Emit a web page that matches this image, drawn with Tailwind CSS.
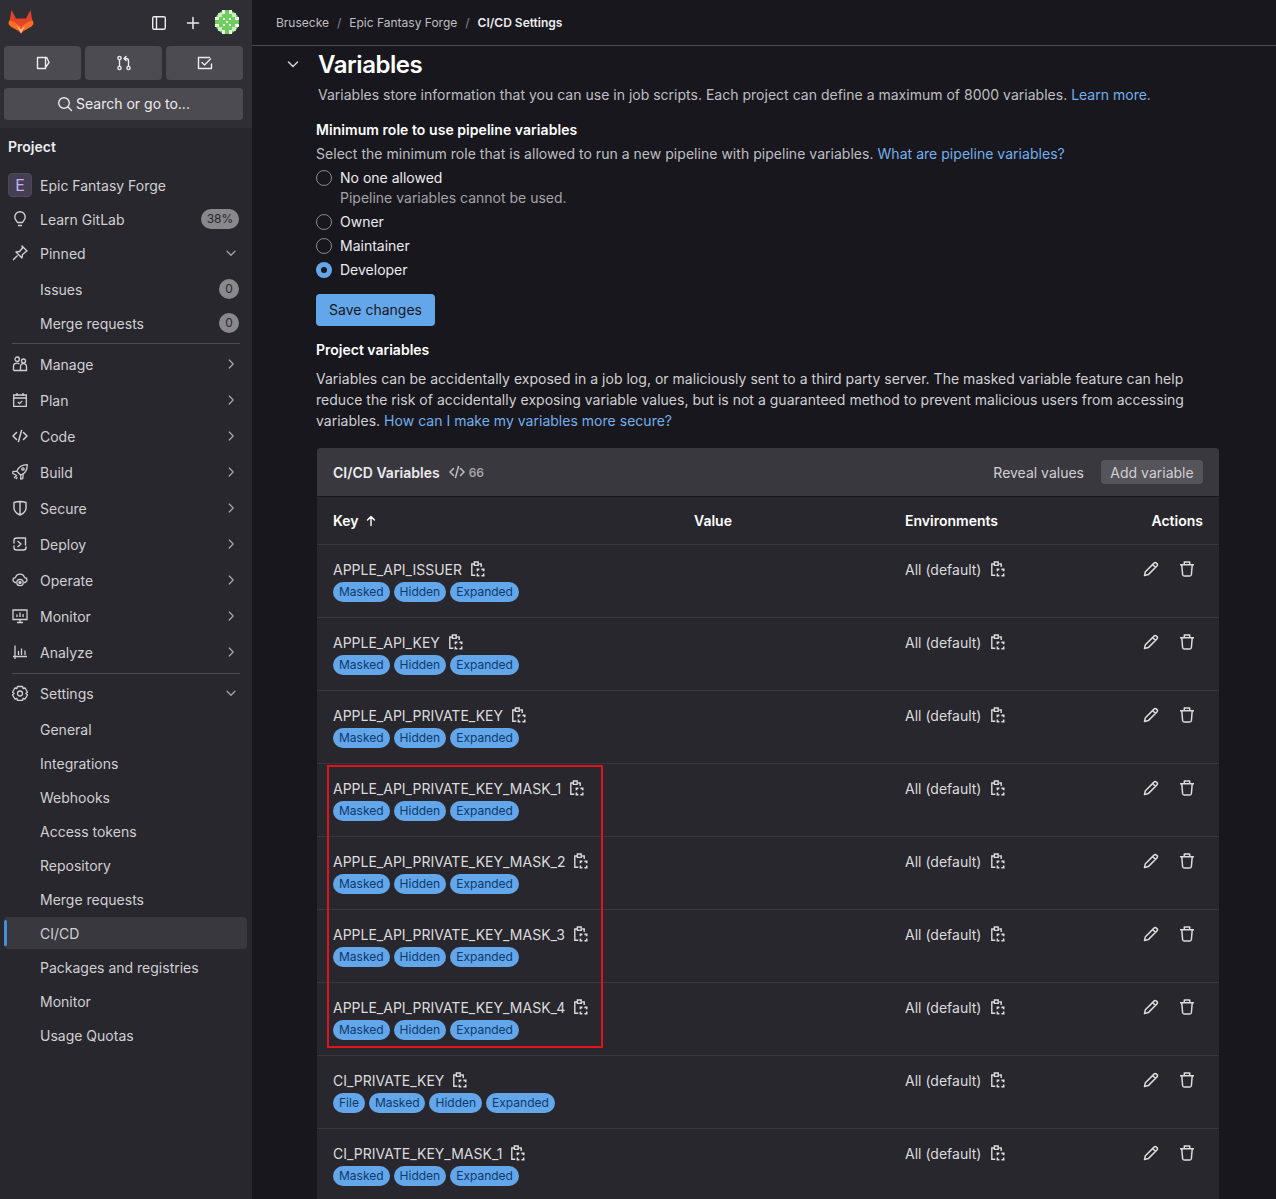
<!DOCTYPE html>
<html lang="en">
<head>
  <meta charset="UTF-8" />
  <title>CI/CD Settings</title>
  <script src="https://cdn.jsdelivr.net/npm/@tailwindcss/browser@4"></script>
</head>
<body class="bg-[#18171d] text-[#ececef] text-[14px] font-['Inter',sans-serif] h-screen overflow-hidden flex">

<!-- icon sheet -->
<svg class="hidden">
  <symbol id="i-copy" viewBox="0 0 16 16" fill="none" stroke="currentColor" stroke-width="1.400">
    <path d="M4.800 3H2.800v11.300h3.500M10.200 3h2v3M5.400 1h3.800v3.400H5.400z"/>
    <path d="M8.400 10.200V8.400h2M12.400 8.400h2.300v1.800M14.700 12.400v2.300h-2.300M10.400 14.700h-2v-2.300" stroke-width="1.600"/>
  </symbol>
  <symbol id="i-pencil" viewBox="0 0 16 16" fill="none" stroke="currentColor" stroke-width="1.500" stroke-linejoin="round">
    <path d="M1.500 14.500l.9-3.800L11 2.100a1.700 1.700 0 0 1 2.400 0l.5.500a1.700 1.700 0 0 1 0 2.400l-8.600 8.600zM9.600 3.500l2.900 2.900"/>
  </symbol>
  <symbol id="i-trash" viewBox="0 0 16 16" fill="none" stroke="currentColor" stroke-width="1.500" stroke-linejoin="round">
    <path d="M1 3.700h14M5.300 3.500V1h5.400v2.500M2.800 4l.8 9.500c.1.800.6 1.500 1.400 1.500h6c.8 0 1.300-.7 1.400-1.500L13.200 4"/>
  </symbol>
  <symbol id="i-down" viewBox="0 0 16 16" fill="none" stroke="currentColor" stroke-width="1.500" stroke-linecap="round" stroke-linejoin="round">
    <path d="M3.500 6l4.500 4.500L12.500 6"/>
  </symbol>
  <symbol id="i-right" viewBox="0 0 16 16" fill="none" stroke="currentColor" stroke-width="1.500" stroke-linecap="round" stroke-linejoin="round">
    <path d="M6 3.500L10.500 8 6 12.500"/>
  </symbol>
  <symbol id="i-code" viewBox="0 0 16 16" fill="none" stroke="currentColor" stroke-width="1.500" stroke-linecap="round" stroke-linejoin="round">
    <path d="M4.500 4.500L1 8l3.500 3.500M11.500 4.500L15 8l-3.500 3.500M9.500 2.500l-3 11"/>
  </symbol>
</svg>

<aside class="w-[252px] shrink-0 h-full bg-[#28272d] flex flex-col">
  <div class="bg-[#2f2e34] h-[128px] pl-1 pr-[9px] shrink-0">
    <div class="h-[46px] flex items-center">
      <svg class="w-[26px] h-[25px] ml-[4px] -mt-[3px]" viewBox="0 0 26 25">
        <path d="M13 24.500L1.200 14.500 3.500 1 8 9.500h10L22.500 1l2.300 13.500z" fill="#e24329"/>
        <path d="M1 11.500c2.600 0 5.500 1.500 8 3.500l4 3-3.500 3.500L2.500 17.500.5 15z M25 11.500c-2.600 0-5.500 1.500-8 3.500l-4 3 3.500 3.500 7-4 2-2.500z" fill="#fc6d26"/>
        <path d="M8.500 16.500L13 20l4.500-3.500-4.500 8z" fill="#fcb87e"/>
      </svg>
      <svg class="w-4 h-4 ml-[117px] text-[#ececef]" viewBox="0 0 16 16" fill="none" stroke="currentColor" stroke-width="1.400"><rect x="1.700" y="1.700" width="12.600" height="12.600" rx="1.500"/><path d="M5.500 2v12"/></svg>
      <svg class="w-4 h-4 ml-[18px] text-[#ececef]" viewBox="0 0 16 16" fill="none" stroke="currentColor" stroke-width="1.500" stroke-linecap="round"><path d="M8 2.500v11M2.500 8h11"/></svg>
      <svg class="ml-[14px] -mt-[2px] w-6 h-6" viewBox="0 0 24 24">
        <circle cx="12" cy="12" r="12" fill="#6fcf5e"/>
        <path d="M0 7h4v3H0zM0 14h4v3H0zM20 7h4v3h-4zM20 14h4v3h-4zM7 0h3v4H7zM14 0h3v4h-3zM7 20h3v4H7zM14 20h3v4h-3z" fill="#eef7e8"/>
        <path d="M3 3h4v4H3zM17 3h4v4h-4zM3 17h4v4H3zM17 17h4v4h-4z" fill="#eef7e8" opacity=".7"/>
        <path d="M8 8h2v2H8zM14 8h2v2h-2zM8 14h2v2H8zM14 14h2v2h-2zM11 11h2v2h-2z" fill="#eef7e8"/>
      </svg>
    </div>
    <div class="grid grid-cols-3 gap-1">
      <div class="h-[34px] bg-[#4c4b51] rounded flex items-center justify-center">
        <svg class="w-4 h-4" viewBox="0 0 16 16" fill="none" stroke="currentColor" stroke-width="1.400" stroke-linejoin="round"><path d="M2.500 2.500h8v11h-8zM10.500 2.500h1.200l2.300 5-3.500 5"/></svg>
      </div>
      <div class="h-[34px] bg-[#4c4b51] rounded flex items-center justify-center">
        <svg class="w-4 h-4" viewBox="0 0 16 16" fill="none" stroke="currentColor" stroke-width="1.400" stroke-linecap="round" stroke-linejoin="round"><circle cx="3.500" cy="3" r="1.600"/><circle cx="3.500" cy="13" r="1.600"/><circle cx="12.500" cy="13" r="1.600"/><path d="M3.500 4.700v6.600M12.500 11.300V6c0-1.500-.8-2.500-2.500-2.500H8.500M10 1.500L8 3.500l2 2"/></svg>
      </div>
      <div class="h-[34px] bg-[#4c4b51] rounded flex items-center justify-center">
        <svg class="w-4 h-4" viewBox="0 0 16 16" fill="none" stroke="currentColor" stroke-width="1.400" stroke-linecap="round" stroke-linejoin="round"><path d="M14.500 9v4.500h-13v-11h11M5 7.500L7.500 10l6-6"/></svg>
      </div>
    </div>
    <div class="mt-2 h-8 bg-[#4c4b51] rounded flex items-center justify-center gap-[3px] text-[#ececef] pb-px">
      <svg class="w-4 h-4" viewBox="0 0 16 16" fill="none" stroke="currentColor" stroke-width="1.400" stroke-linecap="round"><circle cx="7" cy="7" r="5.300"/><path d="M11 11l3.500 3.500"/></svg>
      <span>Search or go to...</span>
    </div>
  </div>

  <div class="h-[40px] flex items-center pl-2 pb-1 font-semibold text-[14px] shrink-0">Project</div>

  <nav class="text-[#d1d0d3] flex flex-col">
    <div class="h-[34px] flex items-center pl-2">
      <span class="w-6 h-6 rounded bg-[#453f55] border border-[#4c4b51] text-[#c3b5ee] text-[16px] flex items-center justify-center">E</span>
      <span class="ml-2">Epic Fantasy Forge</span>
    </div>
    <div class="h-[34px] flex items-center pl-3 pr-[13px]">
      <svg class="w-4 h-4" viewBox="0 0 16 16" fill="none" stroke="currentColor" stroke-width="1.400" stroke-linejoin="round"><path d="M5.500 11.500C4.800 9.800 2.800 8.800 2.800 6a5.200 5.200 0 0 1 10.400 0c0 2.800-2 3.800-2.700 5.500zM6 14.500h4"/></svg>
      <span class="ml-3 flex-1">Learn GitLab</span>
      <span class="w-[38px] h-5 rounded-full bg-[#89888d] text-[#28272d] text-[12px] flex items-center justify-center">38%</span>
    </div>
    <div class="h-[34px] flex items-center pl-3 pr-[14px]">
      <svg class="w-4 h-4" viewBox="0 0 16 16" fill="none" stroke="currentColor" stroke-width="1.400" stroke-linejoin="round"><path d="M10 1l5 5-1.500 1-3 2.500-.5 3.500-6-6 3.500-.5L10.500 3zM5.500 10.500L1 15"/></svg>
      <span class="ml-3 flex-1">Pinned</span>
      <svg class="w-[14px] h-[14px] text-[#a4a3a8]"><use href="#i-down"/></svg>
    </div>
    <div class="mt-[2px] h-[34px] flex items-center pl-10 pr-[13px]">
      <span class="flex-1">Issues</span>
      <span class="w-5 h-5 rounded-full bg-[#89888d] text-[#28272d] text-[12px] flex items-center justify-center">0</span>
    </div>
    <div class="h-[34px] flex items-center pl-10 pr-[13px]">
      <span class="flex-1">Merge requests</span>
      <span class="w-5 h-5 rounded-full bg-[#89888d] text-[#28272d] text-[12px] flex items-center justify-center">0</span>
    </div>
    <div class="mx-3 mt-[3px] mb-[2px] border-t border-[#4c4b51]"></div>

    <div class="h-9 flex items-center pl-3 pr-[14px]">
      <svg class="w-4 h-4" viewBox="0 0 16 16" fill="none" stroke="currentColor" stroke-width="1.300"><path d="M3 3.200a2.200 2.200 0 1 1 4.400 0 2.200 2.200 0 0 1-4.400 0z"/><circle cx="11.500" cy="5" r="2"/><path d="M1.500 14.500v-4.300C1.500 8.500 3 7.200 5 7.200c1 0 1.800.3 2.400 1M1.500 14.500h6.500M8.500 14.500v-3.300c0-2 1.300-3.500 3-3.500s3 1.500 3 3.500v3.300z"/></svg>
      <span class="ml-3 flex-1">Manage</span>
      <svg class="w-[14px] h-[14px] text-[#a4a3a8]"><use href="#i-right"/></svg>
    </div>
    <div class="h-9 flex items-center pl-3 pr-[14px]">
      <svg class="w-4 h-4" viewBox="0 0 16 16" fill="none" stroke="currentColor" stroke-width="1.300"><path d="M1.700 3h12.600v11.300H1.700zM1.700 6h12.600M5 1v3M11 1v3M5.800 10l1.700 1.700 2.800-2.800"/></svg>
      <span class="ml-3 flex-1">Plan</span>
      <svg class="w-[14px] h-[14px] text-[#a4a3a8]"><use href="#i-right"/></svg>
    </div>
    <div class="h-9 flex items-center pl-3 pr-[14px]">
      <svg class="w-4 h-4"><use href="#i-code"/></svg>
      <span class="ml-3 flex-1">Code</span>
      <svg class="w-[14px] h-[14px] text-[#a4a3a8]"><use href="#i-right"/></svg>
    </div>
    <div class="h-9 flex items-center pl-3 pr-[14px]">
      <svg class="w-4 h-4" viewBox="0 0 16 16" fill="none" stroke="currentColor" stroke-width="1.300" stroke-linejoin="round"><path d="M15.300.7C10 .7 6.500 3 4.800 7.200l4 4C13 9.500 15.300 6 15.300.7zM4.800 7.200l-3.800.2L.7 9.500l3 1.300M8.800 11.200l-.2 3.800 2.100-.3.500-4.300M2 14l3-3M3.800 15l1.700-1.700"/><circle cx="11" cy="5" r="1.200"/></svg>
      <span class="ml-3 flex-1">Build</span>
      <svg class="w-[14px] h-[14px] text-[#a4a3a8]"><use href="#i-right"/></svg>
    </div>
    <div class="h-9 flex items-center pl-3 pr-[14px]">
      <svg class="w-4 h-4" viewBox="0 0 16 16" fill="none" stroke="currentColor" stroke-width="1.400" stroke-linejoin="round"><path d="M2 2.500c4-1.300 8-1.300 12 0V8c0 3.200-2.500 5.500-6 7-3.500-1.500-6-3.800-6-7zM8 2v13"/></svg>
      <span class="ml-3 flex-1">Secure</span>
      <svg class="w-[14px] h-[14px] text-[#a4a3a8]"><use href="#i-right"/></svg>
    </div>
    <div class="h-9 flex items-center pl-3 pr-[14px]">
      <svg class="w-4 h-4" viewBox="0 0 16 16" fill="none" stroke="currentColor" stroke-width="1.400" stroke-linecap="round" stroke-linejoin="round"><path d="M2 7V4.500C2 3 3 2 4.500 2h9v7M14 11v.500c0 1.500-1 2.500-2.500 2.500h-7C3 14 2 13 2 11.500V10M6 5.500L9 8l-3 2.500"/></svg>
      <span class="ml-3 flex-1">Deploy</span>
      <svg class="w-[14px] h-[14px] text-[#a4a3a8]"><use href="#i-right"/></svg>
    </div>
    <div class="h-9 flex items-center pl-3 pr-[14px]">
      <svg class="w-4 h-4" viewBox="0 0 16 16" fill="none" stroke="currentColor" stroke-width="1.300" stroke-linejoin="round"><path d="M4 10.500H2.800C1.500 9.700 1 8.800 1 8c0-1.300 1.200-2.200 2.500-2.300C4 3.500 5.800 2.200 8 2.200s4 1.300 4.500 3.500C13.800 5.800 15 6.700 15 8c0 .8-.5 1.700-1.800 2.500H12"/><circle cx="8" cy="10.500" r="3.200"/><circle cx="8" cy="10.500" r="1" fill="currentColor"/></svg>
      <span class="ml-3 flex-1">Operate</span>
      <svg class="w-[14px] h-[14px] text-[#a4a3a8]"><use href="#i-right"/></svg>
    </div>
    <div class="h-9 flex items-center pl-3 pr-[14px]">
      <svg class="w-4 h-4" viewBox="0 0 16 16" fill="none" stroke="currentColor" stroke-width="1.300"><path d="M1 2h14v9.500H1zM5 14.500h6M8 11.500v3M5 9V6.500M8 9V4.500M11 9V6"/></svg>
      <span class="ml-3 flex-1">Monitor</span>
      <svg class="w-[14px] h-[14px] text-[#a4a3a8]"><use href="#i-right"/></svg>
    </div>
    <div class="h-9 flex items-center pl-3 pr-[14px]">
      <svg class="w-4 h-4" viewBox="0 0 16 16" fill="none" stroke="currentColor" stroke-width="1.300"><path d="M1 12.500h14M3 1.500V15M6.500 11V7M9.500 11V4.500M13 11V6.500"/></svg>
      <span class="ml-3 flex-1">Analyze</span>
      <svg class="w-[14px] h-[14px] text-[#a4a3a8]"><use href="#i-right"/></svg>
    </div>
    <div class="mx-3 mt-[3px] mb-[2px] border-t border-[#4c4b51]"></div>

    <div class="h-[34px] flex items-center pl-3 pr-[14px]">
      <svg class="w-4 h-4" viewBox="0 0 16 16" fill="none" stroke="currentColor" stroke-width="1.300" stroke-linejoin="round"><path d="M5.500 1.500h5l.6 2 2-.5 2.400 4.300-1.500 1 0 .4 1.500 1-2.400 4.300-2-.5-.6 2h-5l-.6-2-2 .5L.5 9.700l1.500-1v-.4l-1.500-1L2.900 3l2 .5z"/><circle cx="8" cy="8.500" r="2.500"/></svg>
      <span class="ml-3 flex-1">Settings</span>
      <svg class="w-[14px] h-[14px] text-[#a4a3a8]"><use href="#i-down"/></svg>
    </div>
    <div class="mt-[2px] h-[34px] flex items-center pl-10">General</div>
    <div class="h-[34px] flex items-center pl-10">Integrations</div>
    <div class="h-[34px] flex items-center pl-10">Webhooks</div>
    <div class="h-[34px] flex items-center pl-10">Access tokens</div>
    <div class="h-[34px] flex items-center pl-10">Repository</div>
    <div class="h-[34px] flex items-center pl-10">Merge requests</div>
    <div class="relative h-[34px] flex items-center pl-10 before:absolute before:left-1 before:right-[5px] before:inset-y-px before:rounded before:bg-[#3a383f] after:absolute after:left-1 after:top-1 after:bottom-1 after:w-[3px] after:bg-[#428fdc] after:rounded"><span class="relative">CI/CD</span></div>
    <div class="h-[34px] flex items-center pl-10">Packages and registries</div>
    <div class="h-[34px] flex items-center pl-10">Monitor</div>
    <div class="h-[34px] flex items-center pl-10">Usage Quotas</div>
  </nav>
</aside>

<main class="flex-1 min-w-0">
  <div class="h-[46px] border-b border-[#4c4b51] flex items-center pl-6 text-[12px] text-[#bfbfc3]">
    <span>Brusecke</span><span class="mx-2 text-[#89888d]">/</span>
    <span>Epic Fantasy Forge</span><span class="mx-2 text-[#89888d]">/</span>
    <span class="font-semibold text-[#ececef]">CI/CD Settings</span>
  </div>

  <section class="pl-[64px] pr-[56px]">
    <div class="relative pl-[2px] pt-[2px] h-[36px] flex items-center">
      <svg class="absolute -left-[31px] top-[10px] w-4 h-4 text-[#d1d0d3]"><use href="#i-down"/></svg>
      <h2 class="text-[24px] font-semibold tracking-[-0.45px] text-white leading-none">Variables</h2>
    </div>
    <p class="pl-[2px] h-[25px] leading-[25px] text-[#bfbfc3] tracking-[0.01px]">Variables store information that you can use in job scripts. Each project can define a maximum of 8000 variables. <span class="text-[#73b0ec]">Learn more.</span></p>

    <h3 class="mt-[13px] h-5 leading-5 font-semibold text-white tracking-[0.05px]">Minimum role to use pipeline variables</h3>
    <p class="mt-[4px] h-5 leading-5 text-[#bfbfc3] tracking-[0.03px]">Select the minimum role that is allowed to run a new pipeline with pipeline variables. <span class="text-[#73b0ec]">What are pipeline variables?</span></p>

    <div class="mt-[3px] h-5 flex items-center gap-2"><span class="translate-y-px w-4 h-4 rounded-full border border-[#89888d] bg-[#18171d]"></span><span class="text-[#ececef]">No one allowed</span></div>
    <p class="pl-6 h-5 leading-5 mt-[1px] text-[#a4a3a8]">Pipeline variables cannot be used.</p>
    <div class="mt-[3px] h-5 flex items-center gap-2"><span class="translate-y-px w-4 h-4 rounded-full border border-[#89888d] bg-[#18171d]"></span><span class="text-[#ececef]">Owner</span></div>
    <div class="mt-[4px] h-5 flex items-center gap-2"><span class="translate-y-px w-4 h-4 rounded-full border border-[#89888d] bg-[#18171d]"></span><span class="text-[#ececef]">Maintainer</span></div>
    <div class="mt-[4px] h-5 flex items-center gap-2"><span class="translate-y-px w-4 h-4 rounded-full bg-[#63a6e9] flex items-center justify-center"><span class="w-[6px] h-[6px] rounded-full bg-[#18171d]"></span></span><span class="text-[#ececef]">Developer</span></div>

    <button class="mt-[15px] h-8 w-[119px] rounded bg-[#63a6e9] text-[#18171d] flex items-center justify-center pb-[2px]">Save changes</button>

    <h3 class="mt-[14px] h-5 leading-5 font-semibold text-white">Project variables</h3>
    <p class="mt-[8px] leading-[21px] text-[#d1d0d3] w-[890px] tracking-[0.02px]">Variables can be accidentally exposed in a job log, or maliciously sent to a third party server. The masked variable feature can help reduce the risk of accidentally exposing variable values, but is not a guaranteed method to prevent malicious users from accessing variables. <span class="text-[#73b0ec]">How can I make my variables more secure?</span></p>

    <div class="relative mt-[17px] ml-px w-[902px] rounded-t bg-[#28272d]">
      <div class="h-[49px] bg-[#3a383f] rounded-t border-b border-[#18171d] flex items-center pl-4 pr-4">
        <span class="font-semibold">CI/CD Variables</span>
        <svg class="w-4 h-4 ml-[9px] text-[#bfbfc3]"><use href="#i-code"/></svg>
        <span class="ml-[4px] text-[12px] font-semibold text-[#a4a3a8] translate-y-px">66</span>
        <span class="ml-auto text-[#d1d0d3]">Reveal values</span>
        <span class="ml-[17px] h-6 w-[102px] rounded bg-[#55545a] text-[#d1d0d3] flex items-center justify-center">Add variable</span>
      </div>

      <div class="h-[48px] grid grid-cols-[361px_211px_1fr_auto] items-center px-4 font-semibold text-white border-b border-[#3a383f]">
        <div class="flex items-center gap-[6px]">Key <svg class="w-3 h-3" viewBox="0 0 12 12" fill="none" stroke="currentColor" stroke-width="1.400" stroke-linecap="round" stroke-linejoin="round"><path d="M6 10.500v-9M2.500 5L6 1.500 9.500 5"/></svg></div>
        <div>Value</div>
        <div>Environments</div>
        <div>Actions</div>
      </div>

      <!-- rows -->
      <div class="h-[73px] grid grid-cols-[361px_211px_1fr_auto] px-4 pt-[14px] border-b border-[#3a383f]">
        <div>
          <div class="h-5 flex items-center gap-[7px] text-[#dcdcde]">APPLE_API_ISSUER <svg class="w-4 h-4"><use href="#i-copy"/></svg></div>
          <div class="mt-[3px] flex gap-1">
            <span class="h-[20px] px-[6px] rounded-full bg-[#63a6e9] text-[#0b3a6e] text-[12px] leading-[20px]">Masked</span>
            <span class="h-[20px] px-[6px] rounded-full bg-[#63a6e9] text-[#0b3a6e] text-[12px] leading-[20px]">Hidden</span>
            <span class="h-[20px] px-[6px] rounded-full bg-[#63a6e9] text-[#0b3a6e] text-[12px] leading-[20px]">Expanded</span>
          </div>
        </div>
        <div></div>
        <div class="h-5 flex items-center gap-2 text-[#dcdcde]">All (default) <svg class="w-4 h-4"><use href="#i-copy"/></svg></div>
        <div class="h-5 flex items-center gap-5 pr-2 text-[#dcdcde]"><svg class="w-4 h-4"><use href="#i-pencil"/></svg><svg class="w-4 h-4"><use href="#i-trash"/></svg></div>
      </div>
      <div class="h-[73px] grid grid-cols-[361px_211px_1fr_auto] px-4 pt-[14px] border-b border-[#3a383f]">
        <div>
          <div class="h-5 flex items-center gap-[7px] text-[#dcdcde]">APPLE_API_KEY <svg class="w-4 h-4"><use href="#i-copy"/></svg></div>
          <div class="mt-[3px] flex gap-1">
            <span class="h-[20px] px-[6px] rounded-full bg-[#63a6e9] text-[#0b3a6e] text-[12px] leading-[20px]">Masked</span>
            <span class="h-[20px] px-[6px] rounded-full bg-[#63a6e9] text-[#0b3a6e] text-[12px] leading-[20px]">Hidden</span>
            <span class="h-[20px] px-[6px] rounded-full bg-[#63a6e9] text-[#0b3a6e] text-[12px] leading-[20px]">Expanded</span>
          </div>
        </div>
        <div></div>
        <div class="h-5 flex items-center gap-2 text-[#dcdcde]">All (default) <svg class="w-4 h-4"><use href="#i-copy"/></svg></div>
        <div class="h-5 flex items-center gap-5 pr-2 text-[#dcdcde]"><svg class="w-4 h-4"><use href="#i-pencil"/></svg><svg class="w-4 h-4"><use href="#i-trash"/></svg></div>
      </div>
      <div class="h-[73px] grid grid-cols-[361px_211px_1fr_auto] px-4 pt-[14px] border-b border-[#3a383f]">
        <div>
          <div class="h-5 flex items-center gap-[7px] text-[#dcdcde]">APPLE_API_PRIVATE_KEY <svg class="w-4 h-4"><use href="#i-copy"/></svg></div>
          <div class="mt-[3px] flex gap-1">
            <span class="h-[20px] px-[6px] rounded-full bg-[#63a6e9] text-[#0b3a6e] text-[12px] leading-[20px]">Masked</span>
            <span class="h-[20px] px-[6px] rounded-full bg-[#63a6e9] text-[#0b3a6e] text-[12px] leading-[20px]">Hidden</span>
            <span class="h-[20px] px-[6px] rounded-full bg-[#63a6e9] text-[#0b3a6e] text-[12px] leading-[20px]">Expanded</span>
          </div>
        </div>
        <div></div>
        <div class="h-5 flex items-center gap-2 text-[#dcdcde]">All (default) <svg class="w-4 h-4"><use href="#i-copy"/></svg></div>
        <div class="h-5 flex items-center gap-5 pr-2 text-[#dcdcde]"><svg class="w-4 h-4"><use href="#i-pencil"/></svg><svg class="w-4 h-4"><use href="#i-trash"/></svg></div>
      </div>
      <div class="h-[73px] grid grid-cols-[361px_211px_1fr_auto] px-4 pt-[14px] border-b border-[#3a383f]">
        <div>
          <div class="h-5 flex items-center gap-[7px] text-[#dcdcde]">APPLE_API_PRIVATE_KEY_MASK_1 <svg class="w-4 h-4"><use href="#i-copy"/></svg></div>
          <div class="mt-[3px] flex gap-1">
            <span class="h-[20px] px-[6px] rounded-full bg-[#63a6e9] text-[#0b3a6e] text-[12px] leading-[20px]">Masked</span>
            <span class="h-[20px] px-[6px] rounded-full bg-[#63a6e9] text-[#0b3a6e] text-[12px] leading-[20px]">Hidden</span>
            <span class="h-[20px] px-[6px] rounded-full bg-[#63a6e9] text-[#0b3a6e] text-[12px] leading-[20px]">Expanded</span>
          </div>
        </div>
        <div></div>
        <div class="h-5 flex items-center gap-2 text-[#dcdcde]">All (default) <svg class="w-4 h-4"><use href="#i-copy"/></svg></div>
        <div class="h-5 flex items-center gap-5 pr-2 text-[#dcdcde]"><svg class="w-4 h-4"><use href="#i-pencil"/></svg><svg class="w-4 h-4"><use href="#i-trash"/></svg></div>
      </div>
      <div class="h-[73px] grid grid-cols-[361px_211px_1fr_auto] px-4 pt-[14px] border-b border-[#3a383f]">
        <div>
          <div class="h-5 flex items-center gap-[7px] text-[#dcdcde]">APPLE_API_PRIVATE_KEY_MASK_2 <svg class="w-4 h-4"><use href="#i-copy"/></svg></div>
          <div class="mt-[3px] flex gap-1">
            <span class="h-[20px] px-[6px] rounded-full bg-[#63a6e9] text-[#0b3a6e] text-[12px] leading-[20px]">Masked</span>
            <span class="h-[20px] px-[6px] rounded-full bg-[#63a6e9] text-[#0b3a6e] text-[12px] leading-[20px]">Hidden</span>
            <span class="h-[20px] px-[6px] rounded-full bg-[#63a6e9] text-[#0b3a6e] text-[12px] leading-[20px]">Expanded</span>
          </div>
        </div>
        <div></div>
        <div class="h-5 flex items-center gap-2 text-[#dcdcde]">All (default) <svg class="w-4 h-4"><use href="#i-copy"/></svg></div>
        <div class="h-5 flex items-center gap-5 pr-2 text-[#dcdcde]"><svg class="w-4 h-4"><use href="#i-pencil"/></svg><svg class="w-4 h-4"><use href="#i-trash"/></svg></div>
      </div>
      <div class="h-[73px] grid grid-cols-[361px_211px_1fr_auto] px-4 pt-[14px] border-b border-[#3a383f]">
        <div>
          <div class="h-5 flex items-center gap-[7px] text-[#dcdcde]">APPLE_API_PRIVATE_KEY_MASK_3 <svg class="w-4 h-4"><use href="#i-copy"/></svg></div>
          <div class="mt-[3px] flex gap-1">
            <span class="h-[20px] px-[6px] rounded-full bg-[#63a6e9] text-[#0b3a6e] text-[12px] leading-[20px]">Masked</span>
            <span class="h-[20px] px-[6px] rounded-full bg-[#63a6e9] text-[#0b3a6e] text-[12px] leading-[20px]">Hidden</span>
            <span class="h-[20px] px-[6px] rounded-full bg-[#63a6e9] text-[#0b3a6e] text-[12px] leading-[20px]">Expanded</span>
          </div>
        </div>
        <div></div>
        <div class="h-5 flex items-center gap-2 text-[#dcdcde]">All (default) <svg class="w-4 h-4"><use href="#i-copy"/></svg></div>
        <div class="h-5 flex items-center gap-5 pr-2 text-[#dcdcde]"><svg class="w-4 h-4"><use href="#i-pencil"/></svg><svg class="w-4 h-4"><use href="#i-trash"/></svg></div>
      </div>
      <div class="h-[73px] grid grid-cols-[361px_211px_1fr_auto] px-4 pt-[14px] border-b border-[#3a383f]">
        <div>
          <div class="h-5 flex items-center gap-[7px] text-[#dcdcde]">APPLE_API_PRIVATE_KEY_MASK_4 <svg class="w-4 h-4"><use href="#i-copy"/></svg></div>
          <div class="mt-[3px] flex gap-1">
            <span class="h-[20px] px-[6px] rounded-full bg-[#63a6e9] text-[#0b3a6e] text-[12px] leading-[20px]">Masked</span>
            <span class="h-[20px] px-[6px] rounded-full bg-[#63a6e9] text-[#0b3a6e] text-[12px] leading-[20px]">Hidden</span>
            <span class="h-[20px] px-[6px] rounded-full bg-[#63a6e9] text-[#0b3a6e] text-[12px] leading-[20px]">Expanded</span>
          </div>
        </div>
        <div></div>
        <div class="h-5 flex items-center gap-2 text-[#dcdcde]">All (default) <svg class="w-4 h-4"><use href="#i-copy"/></svg></div>
        <div class="h-5 flex items-center gap-5 pr-2 text-[#dcdcde]"><svg class="w-4 h-4"><use href="#i-pencil"/></svg><svg class="w-4 h-4"><use href="#i-trash"/></svg></div>
      </div>
      <div class="h-[73px] grid grid-cols-[361px_211px_1fr_auto] px-4 pt-[14px] border-b border-[#3a383f]">
        <div>
          <div class="h-5 flex items-center gap-[7px] text-[#dcdcde]">CI_PRIVATE_KEY <svg class="w-4 h-4"><use href="#i-copy"/></svg></div>
          <div class="mt-[3px] flex gap-1">
            <span class="h-[20px] px-[6px] rounded-full bg-[#63a6e9] text-[#0b3a6e] text-[12px] leading-[20px]">File</span>
            <span class="h-[20px] px-[6px] rounded-full bg-[#63a6e9] text-[#0b3a6e] text-[12px] leading-[20px]">Masked</span>
            <span class="h-[20px] px-[6px] rounded-full bg-[#63a6e9] text-[#0b3a6e] text-[12px] leading-[20px]">Hidden</span>
            <span class="h-[20px] px-[6px] rounded-full bg-[#63a6e9] text-[#0b3a6e] text-[12px] leading-[20px]">Expanded</span>
          </div>
        </div>
        <div></div>
        <div class="h-5 flex items-center gap-2 text-[#dcdcde]">All (default) <svg class="w-4 h-4"><use href="#i-copy"/></svg></div>
        <div class="h-5 flex items-center gap-5 pr-2 text-[#dcdcde]"><svg class="w-4 h-4"><use href="#i-pencil"/></svg><svg class="w-4 h-4"><use href="#i-trash"/></svg></div>
      </div>
      <div class="h-[73px] grid grid-cols-[361px_211px_1fr_auto] px-4 pt-[14px]">
        <div>
          <div class="h-5 flex items-center gap-[7px] text-[#dcdcde]">CI_PRIVATE_KEY_MASK_1 <svg class="w-4 h-4"><use href="#i-copy"/></svg></div>
          <div class="mt-[3px] flex gap-1">
            <span class="h-[20px] px-[6px] rounded-full bg-[#63a6e9] text-[#0b3a6e] text-[12px] leading-[20px]">Masked</span>
            <span class="h-[20px] px-[6px] rounded-full bg-[#63a6e9] text-[#0b3a6e] text-[12px] leading-[20px]">Hidden</span>
            <span class="h-[20px] px-[6px] rounded-full bg-[#63a6e9] text-[#0b3a6e] text-[12px] leading-[20px]">Expanded</span>
          </div>
        </div>
        <div></div>
        <div class="h-5 flex items-center gap-2 text-[#dcdcde]">All (default) <svg class="w-4 h-4"><use href="#i-copy"/></svg></div>
        <div class="h-5 flex items-center gap-5 pr-2 text-[#dcdcde]"><svg class="w-4 h-4"><use href="#i-pencil"/></svg><svg class="w-4 h-4"><use href="#i-trash"/></svg></div>
      </div>

      <!-- red annotation box -->
      <div class="absolute left-[10px] top-[317px] w-[276px] h-[283px] border-2 border-[#e0141c]"></div>
    </div>
  </section>
</main>

</body>
</html>
